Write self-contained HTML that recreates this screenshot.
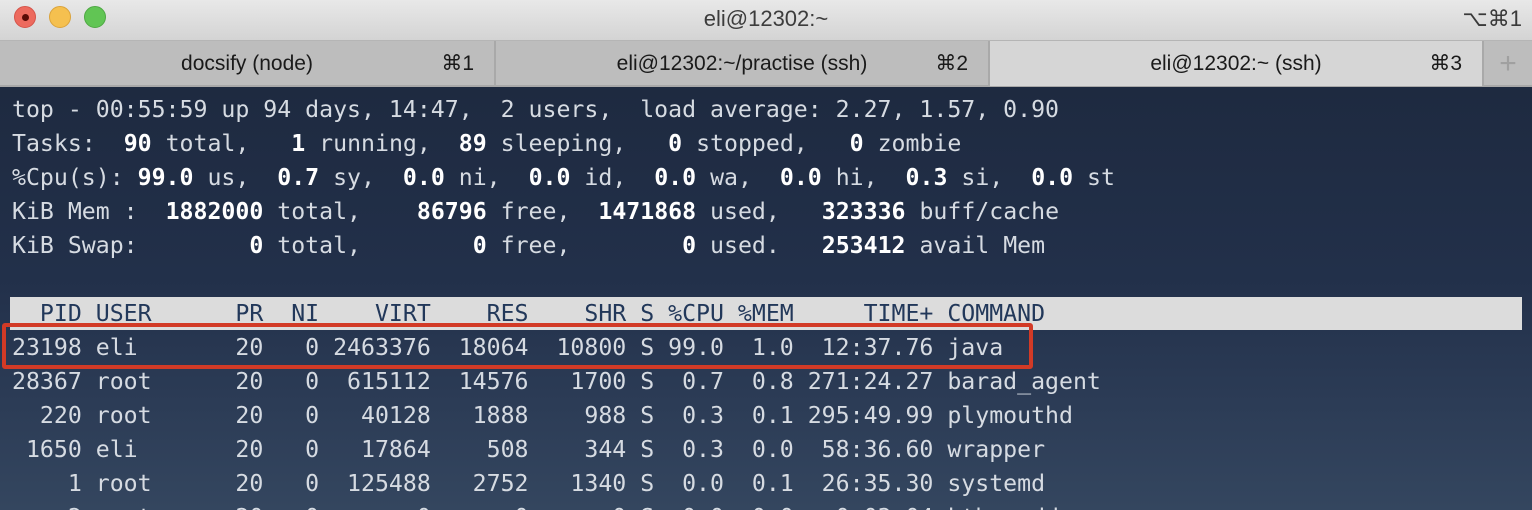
<!DOCTYPE html>
<html><head><meta charset="utf-8"><style>
*{margin:0;padding:0;box-sizing:border-box}
html,body{width:1532px;height:510px;overflow:hidden}
body{position:relative;background:#1f2b41;font-family:"Liberation Sans",sans-serif}
#wrap{position:absolute;left:0;top:0;width:1532px;height:510px;overflow:hidden}
#title{position:absolute;left:0;top:0;width:1532px;height:41px;background:linear-gradient(#e8e8e8,#d4d4d4);border-bottom:1px solid #b5b5b5}
.dot{position:absolute;top:6px;width:22px;height:22px;border-radius:50%}
#tt{position:absolute;left:0;width:1532px;top:6px;text-align:center;font-size:22px;color:#3c3c3c}
#sc{position:absolute;right:10px;top:6px;font-size:22px;color:#3a3a3a}
#tabs{position:absolute;left:0;top:41px;width:1532px;height:46px;background:#bdbdbd;border-bottom:2px solid #a8a8a8}
.tab{position:absolute;top:0;height:45px;font-size:21px;color:#1a1a1a;line-height:45px;text-align:center;border-right:2px solid #a9a9a9}
.tab .k{position:absolute;right:20px;top:0}
#term{position:absolute;left:0;top:87px;width:1532px;height:423px;background:linear-gradient(180deg,#1e2a40 0%,#22304a 45%,#2c3c56 75%,#34465f 100%)}
.l{position:absolute;left:12px;font-family:"DejaVu Sans Mono","Liberation Mono",monospace;font-size:23.2px;color:#d6dbe2;white-space:pre;line-height:34px;height:34px}
.l b{color:#fff}
#hdr{position:absolute;left:10px;top:297px;width:1512px;height:33px;background:#dcdcdc}
#box{position:absolute;left:2px;top:323px;width:1031px;height:46px;border:4px solid #d23a26;border-radius:3px}
</style></head><body><div id="wrap">
<div id="title">
<div class="dot" style="left:14px;background:#ed6a5e;border:1px solid #d5544a"><div style="position:absolute;left:7px;top:7px;width:7px;height:7px;border-radius:50%;background:#5a0b06"></div></div>
<div class="dot" style="left:49px;background:#f5c04f;border:1px solid #dba33a"></div>
<div class="dot" style="left:84px;background:#61c554;border:1px solid #4ea843"></div>
<div id="tt">eli@12302:~</div>
<div id="sc">⌥⌘1</div>
</div>
<div id="tabs">
<div class="tab" style="left:0;width:496px">docsify (node)<span class="k">⌘1</span></div>
<div class="tab" style="left:496px;width:494px">eli@12302:~/practise (ssh)<span class="k">⌘2</span></div>
<div class="tab" style="left:990px;width:494px;background:#d6d6d6">eli@12302:~ (ssh)<span class="k">⌘3</span></div>
<div class="tab" style="left:1484px;width:48px;border:none;color:#a0a0a0;font-size:30px;font-weight:300">+</div>
</div>
<div id="term"></div>
<div id="hdr"></div>
<div class="l" style="top:93px">top - 00:55:59 up 94 days, 14:47,  2 users,  load average: 2.27, 1.57, 0.90</div>
<div class="l" style="top:127px">Tasks:  <b>90</b> total,   <b>1</b> running,  <b>89</b> sleeping,   <b>0</b> stopped,   <b>0</b> zombie</div>
<div class="l" style="top:161px">%Cpu(s): <b>99.0</b> us,  <b>0.7</b> sy,  <b>0.0</b> ni,  <b>0.0</b> id,  <b>0.0</b> wa,  <b>0.0</b> hi,  <b>0.3</b> si,  <b>0.0</b> st</div>
<div class="l" style="top:195px">KiB Mem :  <b>1882000</b> total,    <b>86796</b> free,  <b>1471868</b> used,   <b>323336</b> buff/cache</div>
<div class="l" style="top:229px">KiB Swap:        <b>0</b> total,        <b>0</b> free,        <b>0</b> used.   <b>253412</b> avail Mem</div>
<div class="l" style="top:297px;color:#22385a">  PID USER      PR  NI    VIRT    RES    SHR S %CPU %MEM     TIME+ COMMAND</div>
<div class="l" style="top:331px">23198 eli       20   0 2463376  18064  10800 S 99.0  1.0  12:37.76 java</div>
<div class="l" style="top:365px">28367 root      20   0  615112  14576   1700 S  0.7  0.8 271:24.27 barad_agent</div>
<div class="l" style="top:399px">  220 root      20   0   40128   1888    988 S  0.3  0.1 295:49.99 plymouthd</div>
<div class="l" style="top:433px"> 1650 eli       20   0   17864    508    344 S  0.3  0.0  58:36.60 wrapper</div>
<div class="l" style="top:467px">    1 root      20   0  125488   2752   1340 S  0.0  0.1  26:35.30 systemd</div>
<div class="l" style="top:501px">    2 root      20   0       0      0      0 S  0.0  0.0   0:03.04 kthreadd</div>
<div id="box"></div>
</div></body></html>
